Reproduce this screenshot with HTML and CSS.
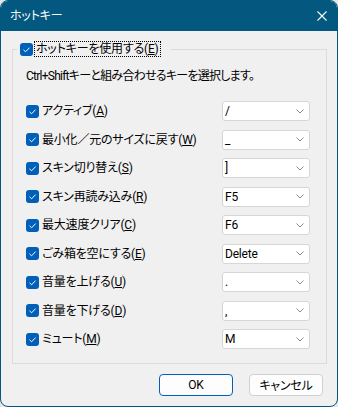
FILE: index.html
```html
<!DOCTYPE html>
<html>
<head>
    <meta charset="utf-8">
    <title>ホットキー</title>
    <link rel="stylesheet" href="styles.css">
</head>
<body>
    <div class="window">
        <div class="titlebar">
            <span class="title">ホットキー</span>
            <svg class="close" width="10" height="10" viewBox="0 0 10 10">
                <path d="M0.5 0.5 L9.5 9.5 M9.5 0.5 L0.5 9.5" stroke="#fff" stroke-width="1.1" fill="none"/>
            </svg>
        </div>

        <div class="client">
            <fieldset class="group">
                <legend class="group-title">
                    <span class="box"><svg width="13" height="13" viewBox="0 0 13 13"><path d="M3.5 6.8 L5.6 8.8 L9.6 4.6" stroke="#fff" stroke-width="1" fill="none"/></svg></span>
                    <span class="focus">ホットキーを使用する(<u>E</u>)</span>
                </legend>

                <div class="group-body">
                    <div class="desc">Ctrl+Shiftキーと組み合わせるキーを選択します。</div>

                    <div class="rows">
                        <div class="row">
                            <label class="check"><span class="box"><svg width="13" height="13" viewBox="0 0 13 13"><path d="M3.5 6.8 L5.6 8.8 L9.6 4.6" stroke="#fff" stroke-width="1" fill="none"/></svg></span><span>アクティブ(<u>A</u>)</span></label>
                            <div class="select"><span>/</span><svg class="chev" width="8" height="5" viewBox="0 0 8 5"><path d="M0.5 0.5 L4 4 L7.5 0.5" stroke="#8a8a8a" fill="none"/></svg></div>
                        </div>
                        <div class="row">
                            <label class="check"><span class="box"><svg width="13" height="13" viewBox="0 0 13 13"><path d="M3.5 6.8 L5.6 8.8 L9.6 4.6" stroke="#fff" stroke-width="1" fill="none"/></svg></span><span>最小化／元のサイズに戻す(<u>W</u>)</span></label>
                            <div class="select"><span>_</span><svg class="chev" width="8" height="5" viewBox="0 0 8 5"><path d="M0.5 0.5 L4 4 L7.5 0.5" stroke="#8a8a8a" fill="none"/></svg></div>
                        </div>
                        <div class="row">
                            <label class="check"><span class="box"><svg width="13" height="13" viewBox="0 0 13 13"><path d="M3.5 6.8 L5.6 8.8 L9.6 4.6" stroke="#fff" stroke-width="1" fill="none"/></svg></span><span>スキン切り替え(<u>S</u>)</span></label>
                            <div class="select"><span>]</span><svg class="chev" width="8" height="5" viewBox="0 0 8 5"><path d="M0.5 0.5 L4 4 L7.5 0.5" stroke="#8a8a8a" fill="none"/></svg></div>
                        </div>
                        <div class="row">
                            <label class="check"><span class="box"><svg width="13" height="13" viewBox="0 0 13 13"><path d="M3.5 6.8 L5.6 8.8 L9.6 4.6" stroke="#fff" stroke-width="1" fill="none"/></svg></span><span>スキン再読み込み(<u>R</u>)</span></label>
                            <div class="select"><span>F5</span><svg class="chev" width="8" height="5" viewBox="0 0 8 5"><path d="M0.5 0.5 L4 4 L7.5 0.5" stroke="#8a8a8a" fill="none"/></svg></div>
                        </div>
                        <div class="row">
                            <label class="check"><span class="box"><svg width="13" height="13" viewBox="0 0 13 13"><path d="M3.5 6.8 L5.6 8.8 L9.6 4.6" stroke="#fff" stroke-width="1" fill="none"/></svg></span><span>最大速度クリア(<u>C</u>)</span></label>
                            <div class="select"><span>F6</span><svg class="chev" width="8" height="5" viewBox="0 0 8 5"><path d="M0.5 0.5 L4 4 L7.5 0.5" stroke="#8a8a8a" fill="none"/></svg></div>
                        </div>
                        <div class="row">
                            <label class="check"><span class="box"><svg width="13" height="13" viewBox="0 0 13 13"><path d="M3.5 6.8 L5.6 8.8 L9.6 4.6" stroke="#fff" stroke-width="1" fill="none"/></svg></span><span>ごみ箱を空にする(<u>E</u>)</span></label>
                            <div class="select"><span>Delete</span><svg class="chev" width="8" height="5" viewBox="0 0 8 5"><path d="M0.5 0.5 L4 4 L7.5 0.5" stroke="#8a8a8a" fill="none"/></svg></div>
                        </div>
                        <div class="row">
                            <label class="check"><span class="box"><svg width="13" height="13" viewBox="0 0 13 13"><path d="M3.5 6.8 L5.6 8.8 L9.6 4.6" stroke="#fff" stroke-width="1" fill="none"/></svg></span><span>音量を上げる(<u>U</u>)</span></label>
                            <div class="select"><span>.</span><svg class="chev" width="8" height="5" viewBox="0 0 8 5"><path d="M0.5 0.5 L4 4 L7.5 0.5" stroke="#8a8a8a" fill="none"/></svg></div>
                        </div>
                        <div class="row">
                            <label class="check"><span class="box"><svg width="13" height="13" viewBox="0 0 13 13"><path d="M3.5 6.8 L5.6 8.8 L9.6 4.6" stroke="#fff" stroke-width="1" fill="none"/></svg></span><span>音量を下げる(<u>D</u>)</span></label>
                            <div class="select"><span>,</span><svg class="chev" width="8" height="5" viewBox="0 0 8 5"><path d="M0.5 0.5 L4 4 L7.5 0.5" stroke="#8a8a8a" fill="none"/></svg></div>
                        </div>
                        <div class="row">
                            <label class="check"><span class="box"><svg width="13" height="13" viewBox="0 0 13 13"><path d="M3.5 6.8 L5.6 8.8 L9.6 4.6" stroke="#fff" stroke-width="1" fill="none"/></svg></span><span>ミュート(<u>M</u>)</span></label>
                            <div class="select"><span>M</span><svg class="chev" width="8" height="5" viewBox="0 0 8 5"><path d="M0.5 0.5 L4 4 L7.5 0.5" stroke="#8a8a8a" fill="none"/></svg></div>
                        </div>
                    </div>
                </div>
            </fieldset>

            <div class="buttons">
                <button class="btn btn-default">OK</button>
                <button class="btn">キャンセル</button>
            </div>
        </div>
    </div>
</body>
</html>
```

FILE: styles.css
```css
body {
    margin: 0;
    background-color: #e6e6e6;
    font-family: Roboto, "Noto Sans CJK JP", sans-serif;
    font-size: 12px;
    font-feature-settings: "palt";
    letter-spacing: -0.2px;
    color: #000;
}
.window {
    width: 338px;
    height: 407px;
    box-sizing: border-box;
    border: 1px solid #06557e;
    border-radius: 8px;
    overflow: hidden;
    background-color: #f0f0f0;
    display: flex;
    flex-direction: column;
}
.titlebar {
    height: 30px;
    flex-shrink: 0;
    background-color: #03587f;
    display: flex;
    align-items: center;
    justify-content: space-between;
    padding: 0 10px 0 9px;
}
.title {
    color: #fff;
    line-height: 16px;
}
.close {
    display: block;
    margin-top: -1px;
}
.client {
    padding: 10px 10px 0 11px;
}
.group {
    margin: 0;
    padding: 0;
    border: 1px solid #dcdcdc;
    min-width: 0;
}
.group-title {
    margin-left: 4px;
    padding: 0 0 0 3px;
    width: 154px;
    box-sizing: border-box;
    height: 16px;
    display: flex;
    align-items: center;
    gap: 1px;
}
.focus {
    border: 1px dotted #000;
    line-height: 14px;
    padding: 0 1px;
}
.group-body {
    padding: 11px 16px 9px 13px;
}
.desc {
    line-height: 16px;
    letter-spacing: -0.75px;
}
.rows {
    margin-top: 13px;
}
.row {
    height: 28.5px;
    display: flex;
    align-items: center;
    justify-content: space-between;
}
.check {
    display: flex;
    align-items: center;
    gap: 3px;
    line-height: 16px;
}
.box {
    width: 13px;
    height: 13px;
    border-radius: 3px;
    background-color: #005fb8;
    display: block;
    flex-shrink: 0;
}
.box svg {
    display: block;
}
.select {
    width: 88px;
    height: 20px;
    box-sizing: border-box;
    background-color: #fff;
    border: 1px solid #d6d6d6;
    border-radius: 3px;
    display: flex;
    align-items: center;
    justify-content: space-between;
    padding: 0 5px 0 2px;
    line-height: 16px;
}
.chev {
    display: block;
}
.buttons {
    display: flex;
    justify-content: flex-end;
    gap: 16px;
    margin-top: 10px;
    padding-right: 4px;
}
.btn {
    width: 74px;
    height: 22px;
    box-sizing: border-box;
    background-color: #fdfdfd;
    border: 1px solid #d0d0d0;
    border-radius: 4px;
    font-family: inherit;
    font-size: 12px;
    font-feature-settings: "palt";
    letter-spacing: -0.2px;
    padding: 0;
    color: #000;
}
.btn-default {
    border-color: #005fb8;
}
```
